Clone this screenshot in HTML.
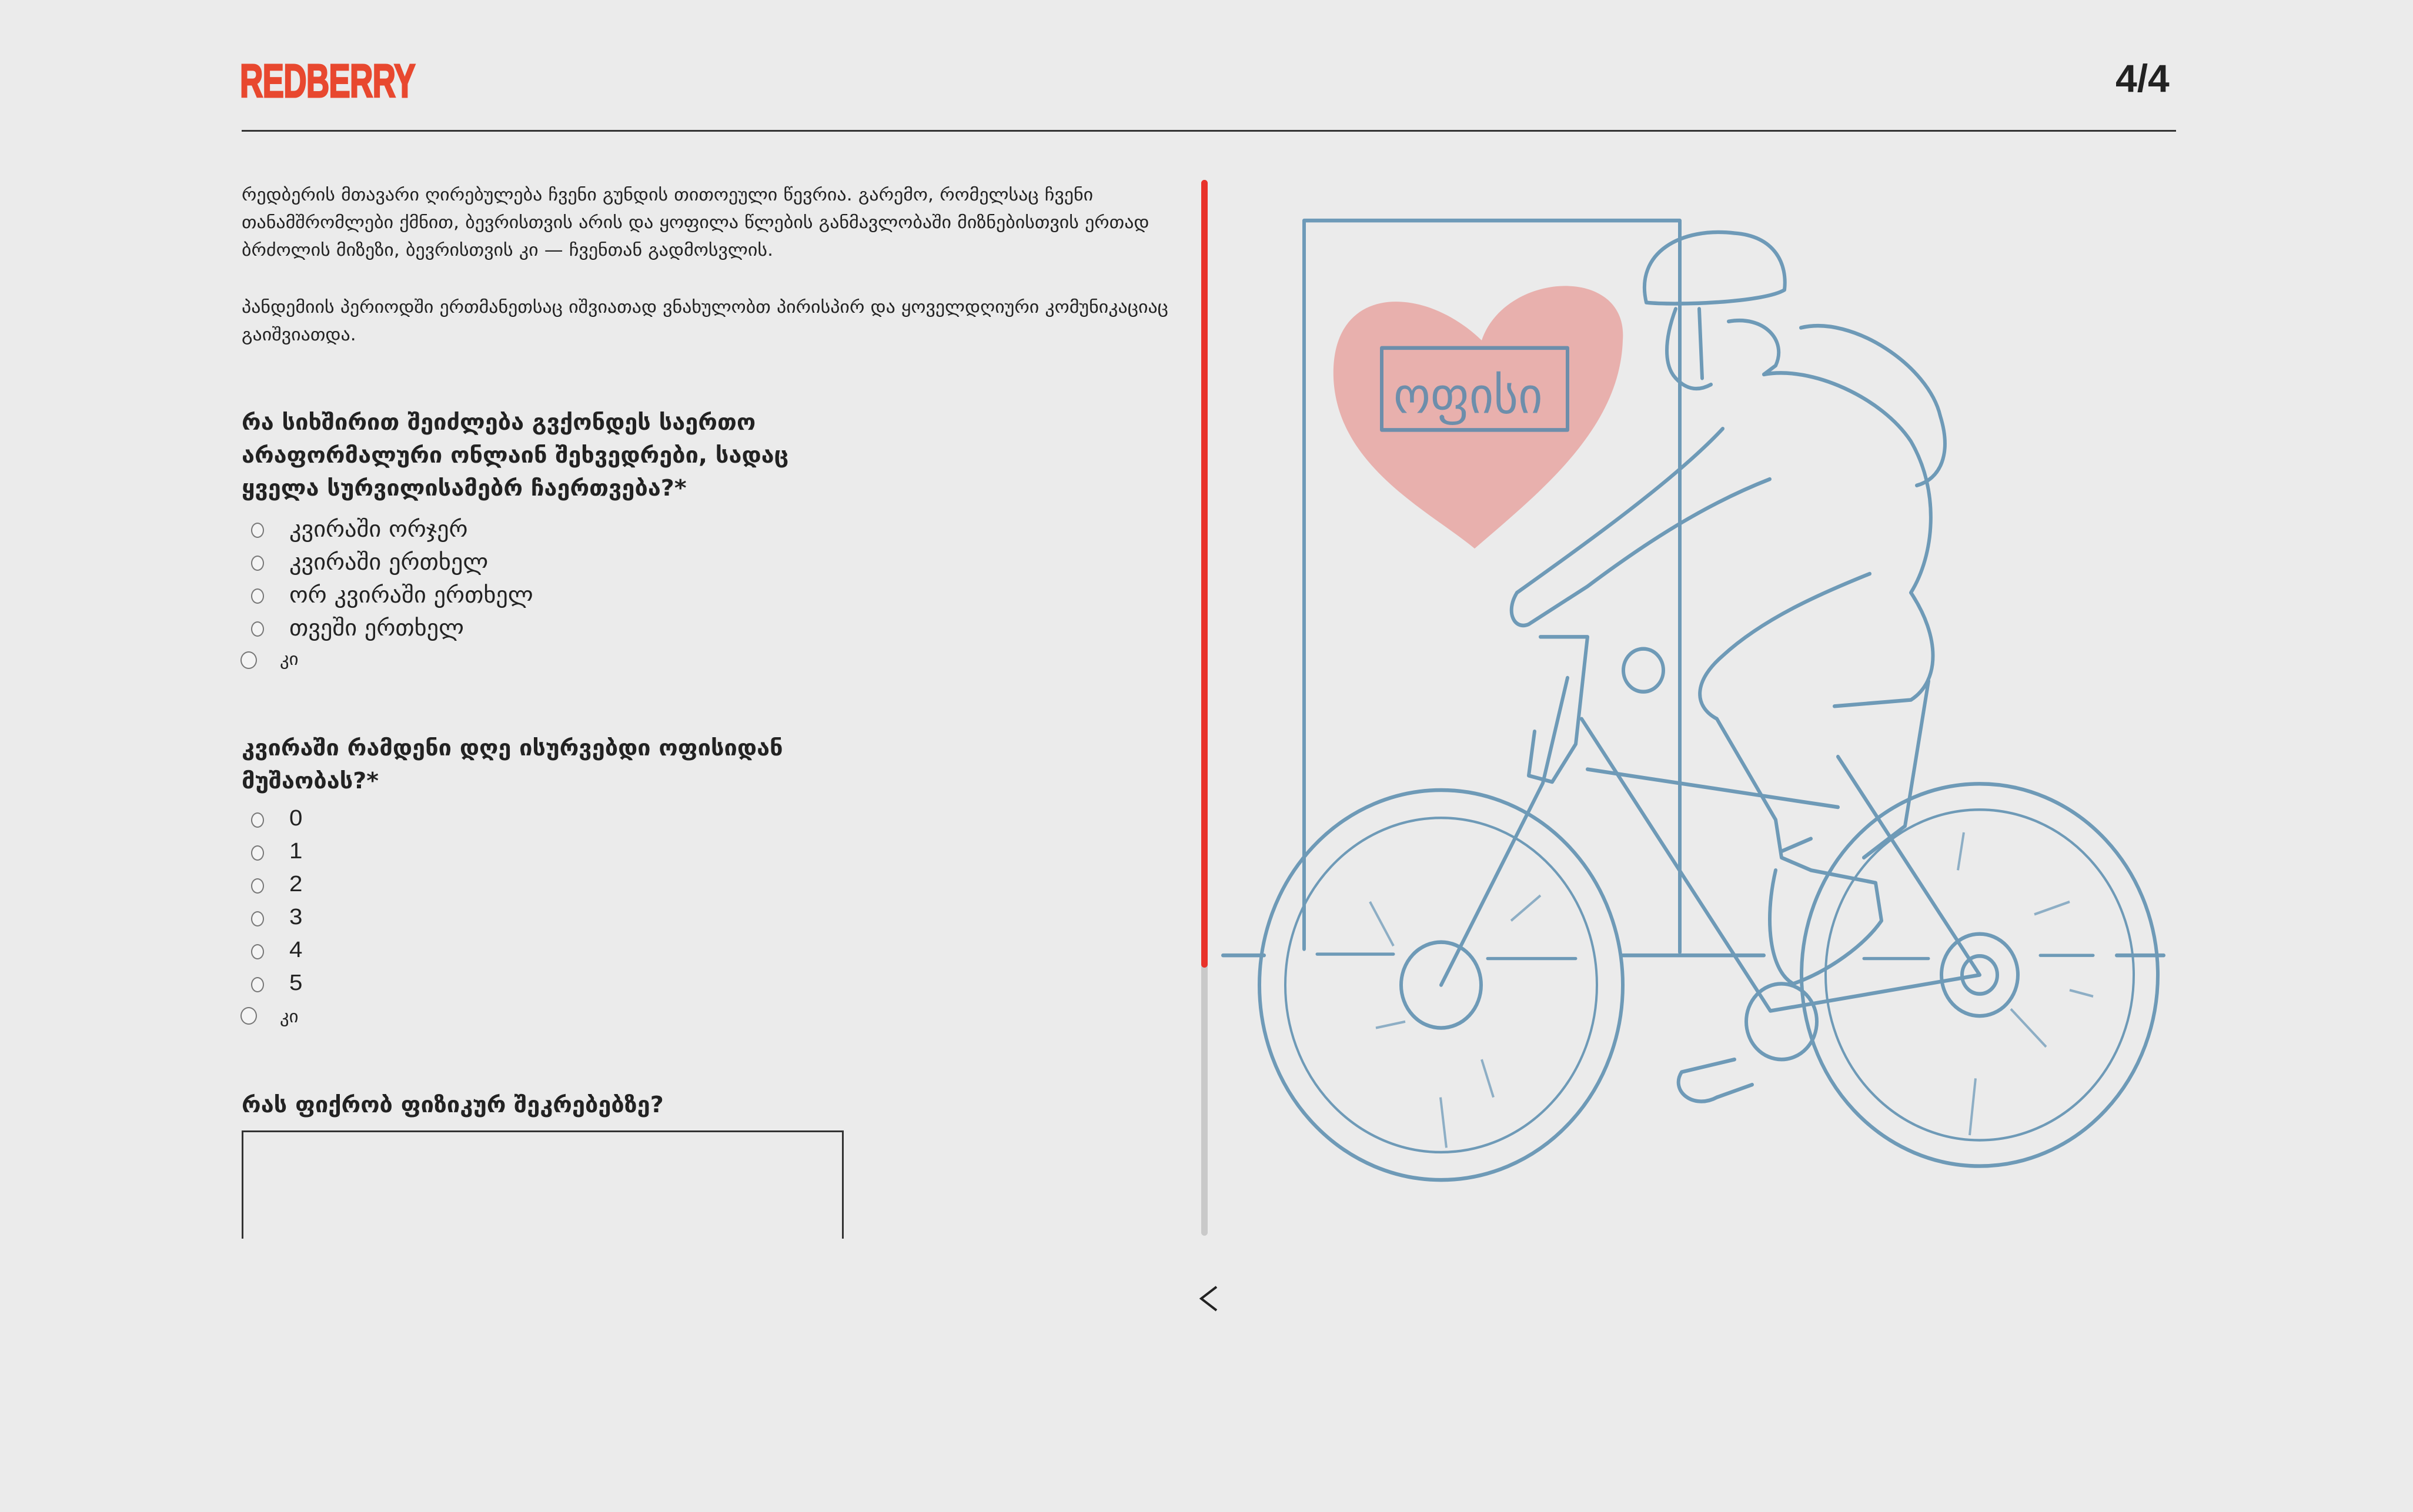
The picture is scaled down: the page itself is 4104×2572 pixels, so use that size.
<!DOCTYPE html>
<html><head><meta charset="utf-8"><style>
*{margin:0;padding:0;box-sizing:border-box}
body{width:4104px;height:2572px;background:#ebebeb;position:relative;overflow:hidden;font-family:"DejaVu Sans","Liberation Sans",sans-serif;color:#222}
.a{position:absolute;white-space:nowrap}
.logo{left:408px;top:92px;font:bold 80px "Liberation Sans",sans-serif;color:#e8482f;transform:scaleX(.68);transform-origin:left top;letter-spacing:-1px;-webkit-text-stroke:3px #e8482f}
.pg{left:3598px;top:95px;font:bold 66px "Liberation Sans",sans-serif;color:#222}
.hr{left:411px;top:221px;width:3290px;height:3px;background:#333}
.p{left:411px;font-size:29px;line-height:47px;color:#222;transform:scaleX(1.1);transform-origin:left top}
.q{left:411px;font-size:38px;font-weight:bold;line-height:56px;transform:scaleX(1.045);transform-origin:left top}
.r{position:absolute;width:22px;height:26px;border:2px solid #777;border-radius:50%;background:#f4f4f4}
.o{font-size:38px;transform:scaleX(1.06);transform-origin:left top}
</style></head><body>
<div class="a logo">REDBERRY</div>
<div class="a pg">4/4</div>
<div class="a hr"></div>

<div class="a p" style="top:308px">რედბერის მთავარი ღირებულება ჩვენი გუნდის თითოეული წევრია. გარემო, რომელსაც ჩვენი<br>თანამშრომლები ქმნით, ბევრისთვის არის და ყოფილა წლების განმავლობაში მიზნებისთვის ერთად<br>ბრძოლის მიზეზი, ბევრისთვის კი — ჩვენთან გადმოსვლის.</div>
<div class="a p" style="top:499px">პანდემიის პერიოდში ერთმანეთსაც იშვიათად ვნახულობთ პირისპირ და ყოველდღიური კომუნიკაციაც<br>გაიშვიათდა.</div>

<div class="a q" style="top:690px">რა სიხშირით შეიძლება გვქონდეს საერთო<br>არაფორმალური ონლაინ შეხვედრები, სადაც<br>ყველა სურვილისამებრ ჩაერთვება?*</div>

<div class="r" style="left:427px;top:889px"></div><div class="a o" style="left:492px;top:878px">კვირაში ორჯერ</div>
<div class="r" style="left:427px;top:945px"></div><div class="a o" style="left:492px;top:934px">კვირაში ერთხელ</div>
<div class="r" style="left:427px;top:1001px"></div><div class="a o" style="left:492px;top:990px">ორ კვირაში ერთხელ</div>
<div class="r" style="left:427px;top:1057px"></div><div class="a o" style="left:492px;top:1046px">თვეში ერთხელ</div>
<div class="r" style="left:409px;top:1108px;width:28px;height:30px"></div><div class="a o" style="left:476px;top:1104px;font-size:29px">კი</div>

<div class="a q" style="top:1244px">კვირაში რამდენი დღე ისურვებდი ოფისიდან<br>მუშაობას?*</div>
<div class="r" style="left:427px;top:1382px"></div><div class="a o" style="left:492px;top:1371px;font-family:'Liberation Sans'">0</div>
<div class="r" style="left:427px;top:1438px"></div><div class="a o" style="left:492px;top:1427px;font-family:'Liberation Sans'">1</div>
<div class="r" style="left:427px;top:1494px"></div><div class="a o" style="left:492px;top:1483px;font-family:'Liberation Sans'">2</div>
<div class="r" style="left:427px;top:1550px"></div><div class="a o" style="left:492px;top:1539px;font-family:'Liberation Sans'">3</div>
<div class="r" style="left:427px;top:1606px"></div><div class="a o" style="left:492px;top:1595px;font-family:'Liberation Sans'">4</div>
<div class="r" style="left:427px;top:1662px"></div><div class="a o" style="left:492px;top:1651px;font-family:'Liberation Sans'">5</div>
<div class="r" style="left:409px;top:1713px;width:28px;height:30px"></div><div class="a o" style="left:476px;top:1712px;font-size:29px">კი</div>

<div class="a q" style="top:1851px">რას ფიქრობ ფიზიკურ შეკრებებზე?</div>
<div class="a" style="left:411px;top:1923px;width:1024px;height:200px;border:3px solid #333;border-bottom:none"></div>
<div class="a" style="left:0;top:2107px;width:2040px;height:465px;background:#ebebeb"></div>

<div class="a" style="left:2043px;top:306px;width:11px;height:1796px;background:#c9c9c9;border-radius:6px"></div>
<div class="a" style="left:2043px;top:306px;width:11px;height:1340px;background:#e8322a;border-radius:6px"></div>

<svg class="a" style="left:0;top:0" width="4104" height="2572" viewBox="0 0 4104 2572">
<g transform="translate(0,300) scale(1,1.073) translate(0,-300)">
<path d="M2268 620 C2262 470 2420 470 2520 560 C2560 450 2770 440 2760 560 C2755 700 2620 800 2508 890 C2430 830 2275 760 2268 620Z" fill="#e8b0ad"/>
<g fill="none" stroke="#4f86ab" stroke-width="6" stroke-linecap="round" stroke-linejoin="round" opacity=".8">
<rect x="2350" y="572" width="316" height="130"/>
<text x="2370" y="675" font-size="80" fill="#4f86ab" stroke="none" font-family="DejaVu Sans">ოფისი</text>
<path d="M2218 1525 V370 H2857 V1530"/>
<path d="M2080 1535 H2150 M2760 1535 H3000 M3600 1535 H3680"/>
<circle cx="2451" cy="1582" r="309"/><circle cx="2451" cy="1582" r="265" stroke-width="4"/>
<circle cx="2451" cy="1582" r="68"/>
<circle cx="3367" cy="1566" r="303"/><circle cx="3367" cy="1566" r="262" stroke-width="4"/>
<circle cx="3367" cy="1566" r="65"/><circle cx="3367" cy="1566" r="30"/>
<path d="M2240 1533 H2370 M2530 1540 H2680 M3470 1535 H3560 M3170 1540 H3280" stroke-width="5"/>
<path d="M2666 1095 L2624 1262 L2451 1582"/>
<path d="M2690 1160 L3011 1623 L3367 1566 L3126 1220"/>
<path d="M2700 1240 L3126 1300"/>
<circle cx="2795" cy="1083" r="34"/>
<circle cx="3030" cy="1640" r="60"/>
<path d="M2800 500 C2780 420 2860 380 2950 390 C3020 395 3040 440 3035 480 C3000 500 2850 505 2800 500Z"/>
<path d="M2850 510 C2830 560 2830 600 2850 620 C2870 640 2890 640 2910 630 M2890 510 L2895 620"/>
<path d="M2940 530 C3000 520 3040 560 3020 600 L3000 614"/>
<path d="M3000 614 C3080 600 3200 650 3250 720 C3300 800 3290 900 3250 960 C3300 1030 3300 1100 3250 1130 L3120 1140"/>
<path d="M3063 540 C3150 520 3280 600 3300 680 C3320 740 3300 780 3260 790"/>
<path d="M2930 700 C2850 780 2700 880 2580 960 C2560 990 2575 1020 2600 1010 L2700 950 C2800 880 2900 820 3010 780"/>
<path d="M2620 1030 L2700 1030 L2680 1200 L2640 1260 L2600 1250 L2610 1180"/>
<path d="M3180 930 C3100 960 3000 1000 2930 1060 C2880 1100 2880 1140 2920 1160 L3020 1320 L3030 1380 L3080 1400"/>
<path d="M3280 1100 L3240 1330 L3170 1380"/>
<path d="M3020 1400 C3000 1480 3010 1560 3050 1580 C3110 1560 3170 1520 3200 1480 L3190 1420 L3080 1400"/>
<path d="M3030 1370 L3080 1350"/>
<path d="M2950 1700 L2860 1720 C2840 1750 2880 1780 2920 1760 L2980 1740"/>
</g>
<g stroke="#4f86ab" stroke-width="4" opacity=".6" fill="none">
<path d="M2330 1450 L2370 1520 M2570 1480 L2620 1440 M2340 1650 L2390 1640 M2520 1700 L2540 1760 M2450 1760 L2460 1840 M3340 1340 L3330 1400 M3420 1620 L3480 1680 M3460 1470 L3520 1450 M3360 1730 L3350 1820 M3520 1590 L3560 1600"/>
</g>
</g>
</svg>

<svg class="a" style="left:2035px;top:2185px" width="40" height="50" viewBox="0 0 40 50"><path d="M34 4 L8 24 L34 44" fill="none" stroke="#222" stroke-width="4"/></svg>
</body></html>
